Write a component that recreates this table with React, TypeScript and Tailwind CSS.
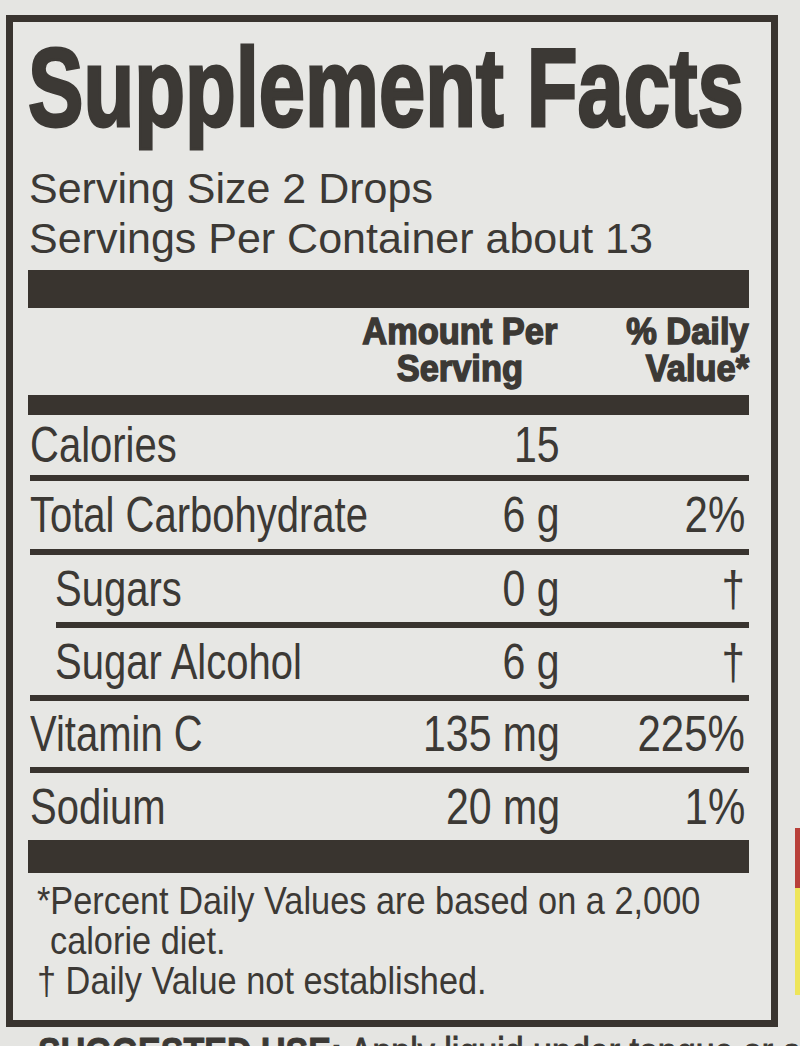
import React from 'react';

interface FactRow {
  label: string;
  amount: string;
  dv: string;
  height: string;
  indent: boolean;
  lineIndent: boolean;
}

const rows: FactRow[] = [
  { label: 'Calories', amount: '15', dv: '', height: 'h-[60px]', indent: false, lineIndent: false },
  { label: 'Total Carbohydrate', amount: '6 g', dv: '2%', height: 'h-[68px]', indent: false, lineIndent: false },
  { label: 'Sugars', amount: '0 g', dv: '†', height: 'h-[67px]', indent: true, lineIndent: true },
  { label: 'Sugar Alcohol', amount: '6 g', dv: '†', height: 'h-[67px]', indent: true, lineIndent: false },
  { label: 'Vitamin C', amount: '135 mg', dv: '225%', height: 'h-[66px]', indent: false, lineIndent: false },
  { label: 'Sodium', amount: '20 mg', dv: '1%', height: 'h-[67px]', indent: false, lineIndent: false },
];

function Row({ row, last }: { row: FactRow; last: boolean }) {
  return (
    <>
      <div className={`flex items-center ${row.height} text-[50px] leading-[50px]`}>
        <div className={`flex-1 min-w-0 ${row.indent ? 'pl-[27px]' : 'pl-[2px]'}`}>
          <span className="inline-block origin-left scale-x-[0.8] whitespace-nowrap">{row.label}</span>
        </div>
        <div className="w-[200px] shrink-0 flex justify-end">
          <span className="inline-block origin-right scale-x-[0.82] whitespace-nowrap">{row.amount}</span>
        </div>
        <div className="w-[189px] shrink-0 flex justify-end pr-[4px]">
          <span className="inline-block origin-right scale-x-[0.84] whitespace-nowrap">{row.dv}</span>
        </div>
      </div>
      {!last && (
        <div className={`h-[6px] ${row.lineIndent ? 'ml-[28px]' : 'ml-[2px]'} bg-[#39342f]`} />
      )}
    </>
  );
}

export default function App() {
  return (
    <div className="w-[800px] h-[1046px] overflow-hidden flex bg-[#e5e5e2] text-[#3c3935] font-['Liberation_Sans',Arial,sans-serif]">
      <div className="w-[795px] pl-[6px] pt-[15px]">
        {/* label box */}
        <div className="w-[772px] border-[7px] border-[#39342f] pl-[15px] pr-[22px] bg-[#e7e7e4]">
          <div className="mt-[10px] h-[112px] text-[112px] leading-[112px] font-bold">
            <span className="inline-block origin-left scale-x-[0.742] whitespace-nowrap [-webkit-text-stroke:3px_#3c3935]">
              Supplement Facts
            </span>
          </div>

          <div className="mt-[19px] text-[43px] leading-[50px] pl-[1px]">
            <div className="whitespace-nowrap">Serving Size 2 Drops</div>
            <div className="whitespace-nowrap">Servings Per Container about 13</div>
          </div>

          <div className="mt-[7px] h-[38px] bg-[#39342f]" />

          <div className="flex pt-[5px] pb-[8px] text-[37px] leading-[37px] font-bold">
            <div className="flex-1" />
            <div className="w-[200px] flex flex-col items-center">
              <span className="inline-block scale-x-[0.93] whitespace-nowrap [-webkit-text-stroke:1.5px_#3c3935]">Amount Per</span>
              <span className="inline-block scale-x-[0.93] whitespace-nowrap [-webkit-text-stroke:1.5px_#3c3935]">Serving</span>
            </div>
            <div className="w-[189px] flex flex-col items-end">
              <span className="inline-block origin-right scale-x-[0.93] whitespace-nowrap [-webkit-text-stroke:1.5px_#3c3935]">% Daily</span>
              <span className="inline-block origin-right scale-x-[0.93] whitespace-nowrap [-webkit-text-stroke:1.5px_#3c3935]">Value*</span>
            </div>
          </div>

          <div className="h-[20px] bg-[#39342f]" />

          {rows.map((row, i) => (
            <Row key={row.label} row={row} last={i === rows.length - 1} />
          ))}

          <div className="h-[33px] bg-[#39342f]" />

          {/* footnotes */}
          <div className="pt-[8px] pb-[19px] pl-[9px] text-[39px] leading-[40px]">
            <div>
              <span className="inline-block origin-left scale-x-[0.88] whitespace-nowrap">*Percent Daily Values are based on a 2,000</span>
            </div>
            <div className="pl-[13px]">
              <span className="inline-block origin-left scale-x-[0.88] whitespace-nowrap">calorie diet.</span>
            </div>
            <div>
              <span className="inline-block origin-left scale-x-[0.88] whitespace-nowrap">† Daily Value not established.</span>
            </div>
          </div>
        </div>

        <div className="mt-[5px] pl-[32px] text-[40px] leading-[40px] whitespace-nowrap">
          <span className="inline-block origin-left scale-x-[0.85] [-webkit-text-stroke:1px_#3c3935]">
            <span className="font-bold">SUGGESTED USE:</span> Apply liquid under tongue or add to
          </span>
        </div>
      </div>

      {/* edge of the neighbouring panel */}
      <div className="w-[5px] flex flex-col">
        <div className="h-[828px]" />
        <div className="h-[60px] bg-[#b8403a]" />
        <div className="h-[107px] bg-[#eee55a]" />
      </div>
    </div>
  );
}
